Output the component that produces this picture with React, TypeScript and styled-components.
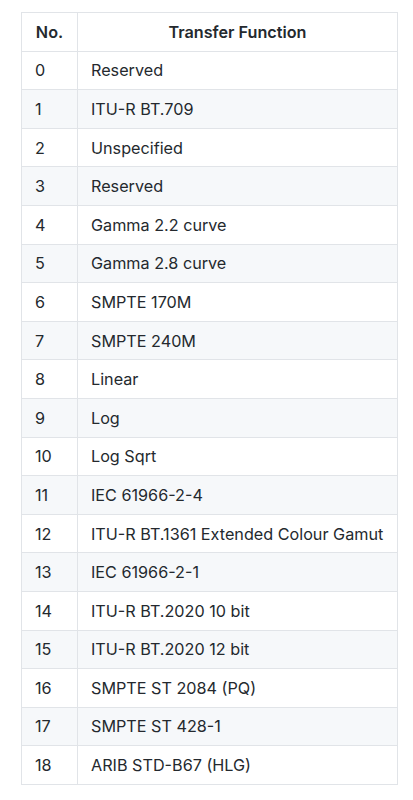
import React from 'react';
import styled, { createGlobalStyle } from 'styled-components';

const GlobalStyle = createGlobalStyle`
  html, body {
    margin: 0;
    padding: 0;
    background: #ffffff;
  }
  body {
    font-family: Inter, "Liberation Sans", Arial, sans-serif;
    color: #24292e;
  }
`;

const Page = styled.div`
  padding: 12px 15px 16px 21px;
`;

const Table = styled.table`
  border-collapse: collapse;
  border-spacing: 0;
  width: 377px;
  font-size: 16.2px;
  line-height: 24px;
  table-layout: fixed;
`;

const Row = styled.tr<{ $striped?: boolean }>`
  height: 38.6px;
  background: ${props => (props.$striped ? '#f6f8fa' : '#ffffff')};
`;

const HeadCell = styled.th<{ $width?: number }>`
  border: 1px solid #e1e4e8;
  padding: 6px 13px;
  font-weight: 600;
  text-align: center;
  width: ${props => (props.$width ? `${props.$width}px` : 'auto')};
  box-sizing: border-box;
`;

const Cell = styled.td`
  border: 1px solid #e1e4e8;
  padding: 6px 13px;
  text-align: left;
  white-space: nowrap;
`;

const transferFunctions = [
  'Reserved',
  'ITU-R BT.709',
  'Unspecified',
  'Reserved',
  'Gamma 2.2 curve',
  'Gamma 2.8 curve',
  'SMPTE 170M',
  'SMPTE 240M',
  'Linear',
  'Log',
  'Log Sqrt',
  'IEC 61966-2-4',
  'ITU-R BT.1361 Extended Colour Gamut',
  'IEC 61966-2-1',
  'ITU-R BT.2020 10 bit',
  'ITU-R BT.2020 12 bit',
  'SMPTE ST 2084 (PQ)',
  'SMPTE ST 428-1',
  'ARIB STD-B67 (HLG)',
];

const App: React.FC = () => {
  return (
    <Page>
      <GlobalStyle />
      <Table>
        <thead>
          <Row>
            <HeadCell $width={56}>No.</HeadCell>
            <HeadCell>Transfer Function</HeadCell>
          </Row>
        </thead>
        <tbody>
          {transferFunctions.map((name, index) => (
            <Row key={index} $striped={index % 2 === 1}>
              <Cell>{index}</Cell>
              <Cell>{name}</Cell>
            </Row>
          ))}
        </tbody>
      </Table>
    </Page>
  );
};

export default App;
